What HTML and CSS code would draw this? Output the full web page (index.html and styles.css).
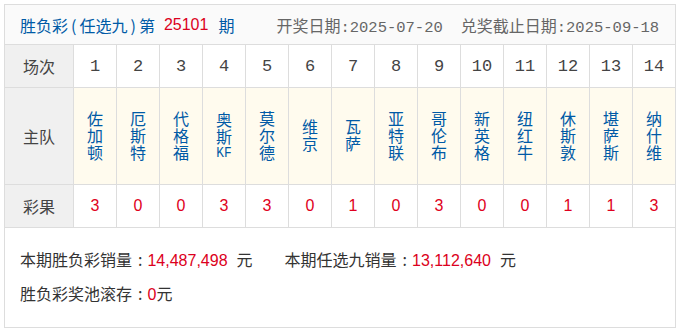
FILE: index.html
```html
<!DOCTYPE html>
<html lang="zh-CN">
<head>
<meta charset="utf-8">
<title>胜负彩(任选九)</title>
<link rel="stylesheet" href="styles.css">
</head>
<body>
<div class="panel">
  <div class="head">
    <span class="title">胜负彩<span class="paren">(</span>任选九<span class="paren">)</span>第</span>
    <span class="issue">25101</span>
    <span class="title">期</span>
    <span class="date">开奖日期<span class="mono">:2025-07-20</span></span>
    <span class="date date2">兑奖截止日期<span class="mono">:2025-09-18</span></span>
  </div>
  <div class="grid">
    <div class="lab">场次</div>
    <div class="num">1</div><div class="num">2</div><div class="num">3</div><div class="num">4</div><div class="num">5</div><div class="num">6</div><div class="num">7</div><div class="num">8</div><div class="num">9</div><div class="num">10</div><div class="num">11</div><div class="num">12</div><div class="num">13</div><div class="num">14</div>
    <div class="lab">主队</div>
    <div class="team"><span class="name">佐加顿</span></div>
    <div class="team"><span class="name">厄斯特</span></div>
    <div class="team"><span class="name">代格福</span></div>
    <div class="team"><span class="name">奥斯<span class="latin">KF</span></span></div>
    <div class="team"><span class="name">莫尔德</span></div>
    <div class="team"><span class="name">维京</span></div>
    <div class="team"><span class="name">瓦萨</span></div>
    <div class="team"><span class="name">亚特联</span></div>
    <div class="team"><span class="name">哥伦布</span></div>
    <div class="team"><span class="name">新英格</span></div>
    <div class="team"><span class="name">纽红牛</span></div>
    <div class="team"><span class="name">休斯敦</span></div>
    <div class="team"><span class="name">堪萨斯</span></div>
    <div class="team"><span class="name">纳什维</span></div>
    <div class="lab">彩果</div>
    <div class="res">3</div><div class="res">0</div><div class="res">0</div><div class="res">3</div><div class="res">3</div><div class="res">0</div><div class="res">1</div><div class="res">0</div><div class="res">3</div><div class="res">0</div><div class="res">0</div><div class="res">1</div><div class="res">1</div><div class="res">3</div>
  </div>
  <div class="sales">
    <p>本期胜负彩销量<span class="colon">:</span><span class="amt">14,487,498</span>元<span class="second">本期任选九销量<span class="colon">:</span><span class="amt">13,112,640</span>元</span></p>
    <p>胜负彩奖池滚存<span class="colon">:</span><span class="amt zero">0</span>元</p>
  </div>
</div>
</body>
</html>
```

FILE: styles.css
```css
html, body {
  margin: 0;
  padding: 0;
  background: #fff;
}
body {
  padding: 4px;
  font-family: "Noto Sans CJK SC", "Noto Sans", sans-serif;
  font-size: 16px;
  color: #333;
}
.panel {
  width: 670px;
  border: 1px solid #dddddd;
}
.head {
  height: 39px;
  display: flex;
  align-items: center;
  padding-left: 15px;
  background: #fafafa;
  border-bottom: 1px solid #dddddd;
  white-space: nowrap;
}
.title {
  color: #005aa6;
}
.paren {
  margin: 0 3px;
}
.issue {
  font-family: "Liberation Sans", Arial, sans-serif;
  color: #dc0020;
  margin: 0 10px 0 9px;
}
.date {
  color: #666;
  margin-left: 42px;
}
.date2 {
  margin-left: 18px;
}
.mono {
  font-family: "Liberation Mono", monospace;
  font-size: 15.5px;
}
.grid {
  display: grid;
  grid-template-columns: 68px repeat(14, 42px);
  grid-template-rows: 42px 96px 42px;
  gap: 1px;
  background: #dddddd;
  border-bottom: 1px solid #dddddd;
}
.grid > div {
  display: flex;
  align-items: center;
  justify-content: center;
  text-align: center;
  background: #fff;
}
.grid > .lab {
  background: #f0f0f0;
  color: #444;
}
.grid > .num {
  font-family: "Liberation Mono", monospace;
  font-size: 17px;
  color: #444;
}
.grid > .team {
  background: #fffbee;
  color: #005aa6;
}
.name {
  display: block;
  writing-mode: vertical-rl;
  letter-spacing: 1px;
  line-height: 20px;
}
.latin {
  font-family: "Liberation Mono", monospace;
  font-size: 14px;
  text-combine-upright: all;
}
.grid > .res {
  font-family: "Liberation Sans", Arial, sans-serif;
  color: #e00020;
}
.sales {
  padding: 15px 15px 16px;
  line-height: 32px;
  color: #333;
}
.sales p {
  margin: 0;
  white-space: nowrap;
}
.colon {
  margin: 0 5px 0 6px;
}
.amt {
  font-family: "Liberation Sans", Arial, sans-serif;
  color: #dc0020;
  margin-right: 9px;
}
.amt.zero {
  margin-right: 0;
}
.second {
  margin-left: 32px;
}
```
